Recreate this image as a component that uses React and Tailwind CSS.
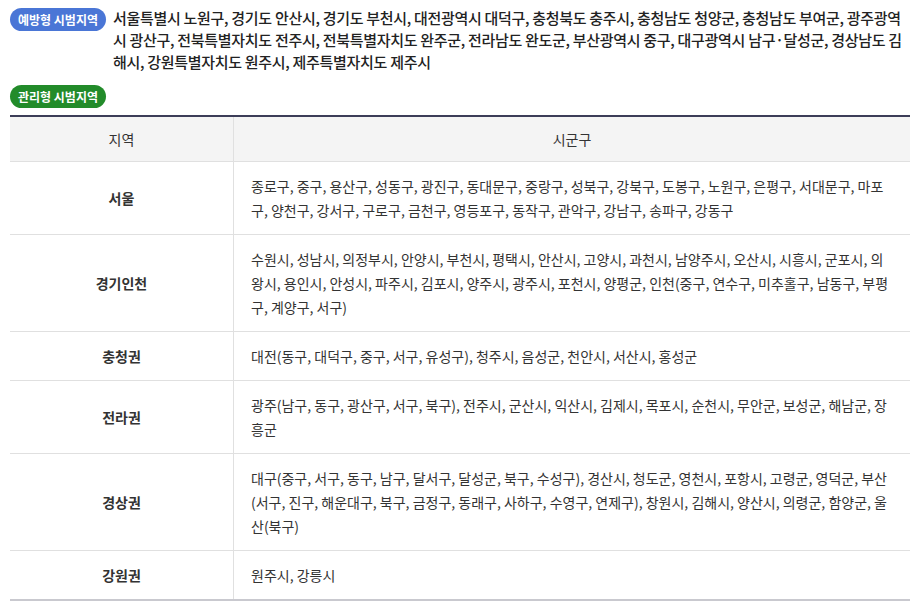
export default function App() {
  const rows = [
    ["서울", "종로구, 중구, 용산구, 성동구, 광진구, 동대문구, 중랑구, 성북구, 강북구, 도봉구, 노원구, 은평구, 서대문구, 마포구, 양천구, 강서구, 구로구, 금천구, 영등포구, 동작구, 관악구, 강남구, 송파구, 강동구"],
    ["경기인천", "수원시, 성남시, 의정부시, 안양시, 부천시, 평택시, 안산시, 고양시, 과천시, 남양주시, 오산시, 시흥시, 군포시, 의왕시, 용인시, 안성시, 파주시, 김포시, 양주시, 광주시, 포천시, 양평군, 인천(중구, 연수구, 미추홀구, 남동구, 부평구, 계양구, 서구)"],
    ["충청권", "대전(동구, 대덕구, 중구, 서구, 유성구), 청주시, 음성군, 천안시, 서산시, 홍성군"],
    ["전라권", "광주(남구, 동구, 광산구, 서구, 북구), 전주시, 군산시, 익산시, 김제시, 목포시, 순천시, 무안군, 보성군, 해남군, 장흥군"],
    ["경상권", "대구(중구, 서구, 동구, 남구, 달서구, 달성군, 북구, 수성구), 경산시, 청도군, 영천시, 포항시, 고령군, 영덕군, 부산(서구, 진구, 해운대구, 북구, 금정구, 동래구, 사하구, 수영구, 연제구), 창원시, 김해시, 양산시, 의령군, 함양군, 울산(북구)"],
    ["강원권", "원주시, 강릉시"],
  ];
  return (
    <div className="w-[919px] h-[611px] bg-white overflow-hidden" style={{ fontFamily: '"Noto Sans CJK KR", "Noto Sans", sans-serif' }}>
      <div className="flex items-start pl-[10px] pt-[8px] pr-[14px]">
        <span className="shrink-0 h-[23px] w-[96px] rounded-full bg-[#4a76d6] text-white text-[12px] font-bold flex items-center justify-center">예방형 시범지역</span>
        <p className="ml-[7px] -mt-[1px] text-[15px] leading-[22px] font-medium text-[#222] tracking-[-0.3px]">
          서울특별시 노원구, 경기도 안산시, 경기도 부천시, 대전광역시 대덕구, 충청북도 충주시, 충청남도 청양군, 충청남도 부여군, 광주광역시 광산구, 전북특별자치도 전주시, 전북특별자치도 완주군, 전라남도 완도군, 부산광역시 중구, 대구광역시 남구·달성군, 경상남도 김해시, 강원특별자치도 원주시, 제주특별자치도 제주시
        </p>
      </div>
      <div className="pl-[10px] mt-[12px]">
        <span className="h-[23px] w-[96px] rounded-full bg-[#228b2a] text-white text-[12px] font-bold flex items-center justify-center">관리형 시범지역</span>
      </div>
      <div className="mx-[10px] mt-[7px] w-[900px] border-t-2 border-t-[#3c3d58] border-b-2 border-b-[#c9c9cf] text-[14px] text-[#333]">
        <div className="flex bg-[#f4f4f4] border-b border-[#e0e0e0] h-[45px]">
          <div className="w-[224px] shrink-0 flex items-center justify-center border-r border-[#e0e0e0]">지역</div>
          <div className="flex-1 flex items-center justify-center">시군구</div>
        </div>
        {rows.map(([r, t], i) => (
          <div key={r} className={`flex ${i < rows.length - 1 ? "border-b border-[#e0e0e0]" : ""}`}>
            <div className="w-[224px] shrink-0 flex items-center justify-center border-r border-[#e0e0e0] font-bold">{r}</div>
            <div className="flex-1 pl-[17px] pr-[20px] py-[12px] leading-[24px]">{t}</div>
          </div>
        ))}
      </div>
    </div>
  );
}
